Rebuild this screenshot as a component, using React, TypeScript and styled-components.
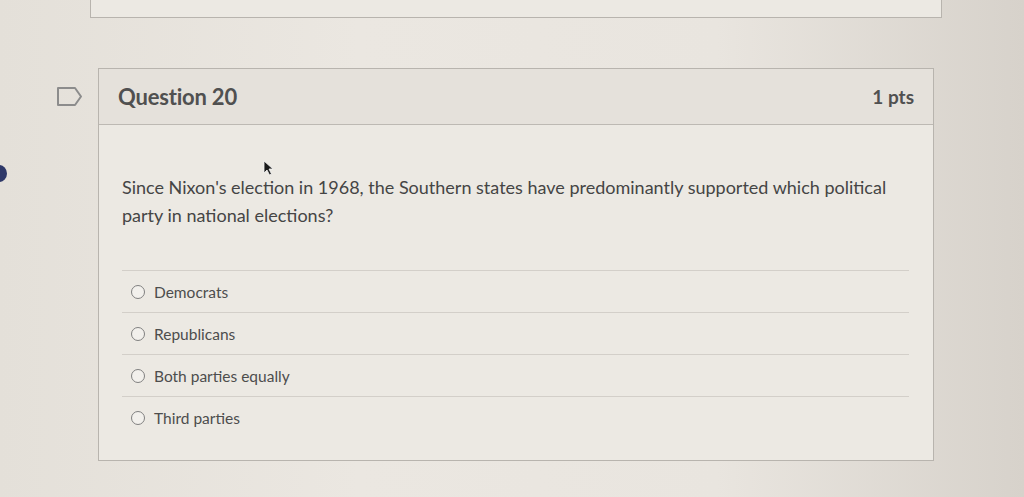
import React from "react";
import styled, { createGlobalStyle } from "styled-components";

const Global = createGlobalStyle`
  html, body { margin: 0; padding: 0; }
  body {
    font-family: Lato, "Open Sans", sans-serif;
    background: #e6e2db;
  }
`;

const Page = styled.div`
  position: relative;
  width: 1024px;
  height: 497px;
  overflow: hidden;
  background: linear-gradient(90deg, #e4e0d9 0%, #ebe7e1 35%, #e9e5df 70%, #d7d2cb 100%);
`;

const PrevCard = styled.div`
  margin-left: 90px;
  width: 850px;
  height: 17px;
  background: #ece9e3;
  border: 1px solid #b8b4ae;
  border-top: none;
`;

const QuestionRow = styled.div`
  display: flex;
  align-items: flex-start;
  margin-top: 50px;
`;

const FlagColumn = styled.div`
  width: 98px;
  display: flex;
  justify-content: flex-start;
  padding-left: 56px;
  padding-top: 18px;
  box-sizing: border-box;
`;

const Card = styled.div`
  width: 834px;
  background: #ece9e3;
  border: 1px solid #b8b4ae;
`;

const Header = styled.div`
  height: 55px;
  display: flex;
  align-items: center;
  justify-content: space-between;
  padding: 0 19px;
  background: #e5e1db;
  border-bottom: 1px solid #bdb9b3;
  color: #505050;
  font-weight: 700;
`;

const Title = styled.span`
  font-size: 22px;
  letter-spacing: -0.2px;
`;

const Points = styled.span`
  font-size: 19px;
`;

const Body = styled.div`
  padding: 48px 24px 22px 23px;
`;

const Prompt = styled.p`
  margin: 0;
  width: 790px;
  font-size: 18px;
  line-height: 28px;
  color: #454545;
`;

const Answers = styled.div`
  margin-top: 41px;
`;

const Answer = styled.label`
  display: flex;
  align-items: center;
  gap: 9px;
  height: 41px;
  padding-left: 9px;
  border-top: 1px solid #d3cfc9;
  font-size: 15.5px;
  color: #4d4d4d;
`;

const Radio = styled.span`
  width: 12px;
  height: 12px;
  border-radius: 50%;
  border: 1.5px solid #808080;
  background: #f2f0ec;
`;

const Dot = styled.div`
  position: absolute;
  left: -9px;
  top: 165px;
  width: 16px;
  height: 17px;
  border-radius: 50%;
  background: #2e3868;
`;

const Cursor = styled.svg`
  position: absolute;
  left: 263px;
  top: 160px;
`;

const answers = ["Democrats", "Republicans", "Both parties equally", "Third parties"];

export default function App() {
  return (
    <Page>
      <Global />
      <PrevCard />
      <QuestionRow>
        <FlagColumn>
          <svg width="27" height="21" viewBox="0 0 27 21">
            <path
              d="M2 2 H19 L25 10.5 L19 19 H2 Z"
              fill="none"
              stroke="#8c8c8c"
              strokeWidth="2"
              strokeLinejoin="round"
            />
          </svg>
        </FlagColumn>
        <Card>
          <Header>
            <Title>Question 20</Title>
            <Points>1 pts</Points>
          </Header>
          <Body>
            <Prompt>
              Since Nixon's election in 1968, the Southern states have predominantly supported which political party in national elections?
            </Prompt>
            <Answers>
              {answers.map((a) => (
                <Answer key={a}>
                  <Radio />
                  {a}
                </Answer>
              ))}
            </Answers>
          </Body>
        </Card>
      </QuestionRow>
      <Dot />
      <Cursor width="12" height="16" viewBox="0 0 12 16">
        <path d="M1 1 L1 13 L4 10 L6.5 15 L8.5 14 L6 9 L10 9 Z" fill="#1a1a1a" stroke="#f5f5f5" strokeWidth="0.8" />
      </Cursor>
    </Page>
  );
}
